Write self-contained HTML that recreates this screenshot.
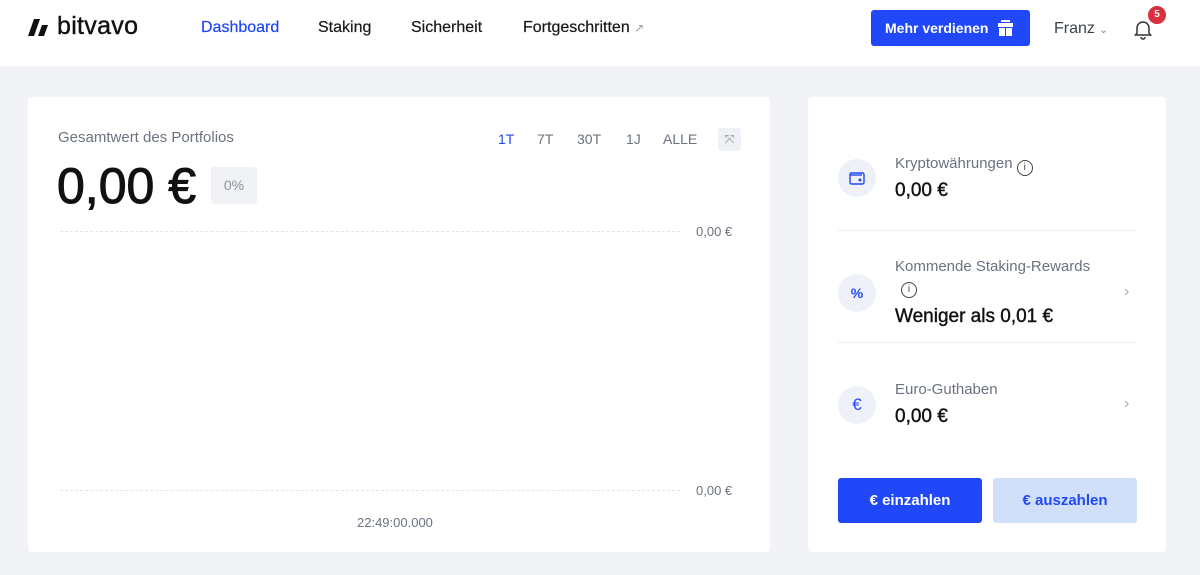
<!DOCTYPE html>
<html><head><meta charset="utf-8"><style>
*{margin:0;padding:0;box-sizing:border-box}
body{width:1200px;height:575px;background:#f1f3f7;font-family:"Liberation Sans",sans-serif;position:relative;overflow:hidden;color:#111}
.a{position:absolute}
.hdr{left:0;top:0;width:1200px;height:66px;background:#fff}
.nav{top:19px;font-size:16px;color:#17181c;-webkit-text-stroke:.2px #17181c}
.card{background:#fff;border-radius:4px}
.gray{color:#6b7280}
.med{-webkit-text-stroke:.4px #111}
.circ{width:38px;height:38px;border-radius:50%;background:#eef1f7;display:flex;align-items:center;justify-content:center}
.sep{height:1px;background:#eceef2;left:838px;width:298px}
.tab{top:131px;font-size:14px;color:#6b7280}
.dash{border-top:1px dashed #e3e5ea;left:60px;width:620px}
</style></head><body>
<div class="a hdr"></div>
<svg class="a" style="left:28px;top:19px" width="24" height="18" viewBox="0 0 24 18"><polygon points="6,0 12,0 6,17 0,17" fill="#111"/><polygon points="14,6 20,6 16,17 10,17" fill="#111"/></svg>
<div class="a med" style="left:57px;top:12px;font-size:25px;letter-spacing:.3px;color:#111">bitvavo</div>
<div class="a nav" style="left:201px;color:#1f45f7;-webkit-text-stroke:.2px #1f45f7">Dashboard</div>
<div class="a nav" style="left:318px">Staking</div>
<div class="a nav" style="left:411px">Sicherheit</div>
<div class="a nav" style="left:523px">Fortgeschritten <span style="font-size:12px;color:#9aa0ab;-webkit-text-stroke:0">↗</span></div>
<div class="a" style="left:871px;top:10px;width:159px;height:36px;background:#2148f8;border-radius:3px;color:#fff;font-weight:bold;font-size:14px;padding:10px 0 0 14px">Mehr verdienen
<svg class="a" style="left:126px;top:10px" width="17" height="16" viewBox="0 0 17 16"><rect x="1" y="3" width="15" height="4" fill="#fff"/><rect x="2" y="8" width="6" height="8" fill="#fff"/><rect x="9" y="8" width="6" height="8" fill="#fff"/><rect x="4" y="0" width="9" height="2" fill="#fff"/></svg></div>
<div class="a" style="left:1054px;top:20px;font-size:16px;color:#3a3f4a">Franz <span style="font-size:10px;color:#777">⌄</span></div>
<svg class="a" style="left:1132px;top:18px" width="22" height="22" viewBox="0 0 22 22" fill="none" stroke="#333" stroke-width="1.5"><path d="M5 15 V10 a6 6 0 0 1 12 0 V15 l1.5 2 H3.5 Z"/><path d="M9 19 a2 2 0 0 0 4 0"/></svg>
<div class="a" style="left:1148px;top:6px;width:18px;height:18px;border-radius:50%;background:#d9303f;color:#fff;font-size:10px;font-weight:bold;text-align:center;line-height:18px">5</div>

<div class="a card" style="left:28px;top:97px;width:742px;height:455px"></div>
<div class="a gray" style="left:58px;top:129px;font-size:15px">Gesamtwert des Portfolios</div>
<div class="a tab" style="left:498px;color:#1f45f7">1T</div>
<div class="a tab" style="left:537px">7T</div>
<div class="a tab" style="left:577px">30T</div>
<div class="a tab" style="left:626px">1J</div>
<div class="a tab" style="left:663px">ALLE</div>
<div class="a" style="left:718px;top:128px;width:23px;height:23px;background:#eef1f6;border-radius:3px;color:#888;font-size:12px;text-align:center;line-height:23px">⤧</div>
<div class="a" style="left:57px;top:157px;font-size:50px;color:#111;-webkit-text-stroke:1px #111">0,00 €</div>
<div class="a" style="left:211px;top:167px;width:46px;height:37px;background:#f0f2f6;border-radius:3px;color:#8a909b;font-size:14px;text-align:center;line-height:37px">0%</div>
<div class="a dash" style="top:231px"></div>
<div class="a gray" style="left:696px;top:224px;font-size:13px">0,00 €</div>
<div class="a dash" style="top:490px"></div>
<div class="a gray" style="left:696px;top:483px;font-size:13px">0,00 €</div>
<div class="a gray" style="left:357px;top:515px;font-size:13px">22:49:00.000</div>

<div class="a card" style="left:808px;top:97px;width:358px;height:455px"></div>
<div class="a circ" style="left:838px;top:159px"><svg width="16" height="14" viewBox="0 0 16 14" fill="none" stroke="#2148f8" stroke-width="1.4"><rect x="1" y="2" width="14" height="11" rx="1.5"/><path d="M1 4 H13"/><circle cx="11" cy="9" r=".8" fill="#2148f8"/></svg></div>
<div class="a gray" style="left:895px;top:155px;font-size:15px">Kryptowährungen <span style="display:inline-block;width:16px;height:16px;border:1.5px solid #444;border-radius:50%;font-size:10px;text-align:center;line-height:13px;color:#444;vertical-align:-2px">i</span></div>
<div class="a med" style="left:895px;top:180px;font-size:19px">0,00 €</div>
<div class="a sep" style="top:230px"></div>
<div class="a circ" style="left:838px;top:274px;color:#2148f8;font-size:14px;font-weight:bold">%</div>
<div class="a gray" style="left:895px;top:258px;font-size:15px">Kommende Staking-Rewards</div>
<div class="a" style="left:901px;top:282px;width:16px;height:16px;border:1.5px solid #444;border-radius:50%;font-size:10px;text-align:center;line-height:13px;color:#444">i</div>
<div class="a med" style="left:895px;top:306px;font-size:19px">Weniger als 0,01 €</div>
<div class="a" style="left:1124px;top:283px;color:#aaa;font-size:16px">›</div>
<div class="a sep" style="top:342px"></div>
<div class="a circ" style="left:838px;top:386px;color:#2148f8;font-size:17px">€</div>
<div class="a gray" style="left:895px;top:381px;font-size:15px">Euro-Guthaben</div>
<div class="a med" style="left:895px;top:406px;font-size:19px">0,00 €</div>
<div class="a" style="left:1124px;top:395px;color:#aaa;font-size:16px">›</div>
<div class="a" style="left:838px;top:478px;width:144px;height:45px;background:#2148f8;border-radius:3px;color:#fff;font-weight:bold;font-size:15px;text-align:center;line-height:45px">€ einzahlen</div>
<div class="a" style="left:993px;top:478px;width:144px;height:45px;background:#d1e0f8;border-radius:3px;color:#2148f8;font-weight:bold;font-size:15px;text-align:center;line-height:45px">€ auszahlen</div>
</body></html>
